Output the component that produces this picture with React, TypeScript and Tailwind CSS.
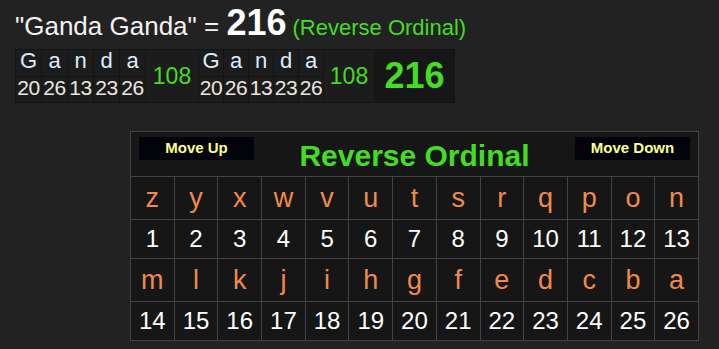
const word = [
  { ch: 'G', v: 20 },
  { ch: 'a', v: 26 },
  { ch: 'n', v: 13 },
  { ch: 'd', v: 23 },
  { ch: 'a', v: 26 },
];

const alphabet = 'zyxwvutsrqponmlkjihgfedcba'.split('');
const rows = [alphabet.slice(0, 13), alphabet.slice(13)];

function WordCells({ wide }: { wide: boolean }) {
  return (
    <>
      {word.map((w, i) => (
        <div key={i} className="flex flex-col gap-[1px]">
          <div
            className={
              (wide ? 'w-[25px]' : 'w-[24px]') +
              ' h-[26px] bg-[#1c1c1c] flex items-end justify-center pb-[4px] text-[22px] leading-none text-[#dcecff]'
            }
          >
            {w.ch}
          </div>
          <div
            className={
              (wide ? 'w-[25px]' : 'w-[24px]') +
              ' h-[25px] bg-[#1c1c1c] flex items-end justify-center pb-[4px] text-[21px] leading-none tracking-[-0.5px] text-[#ebe6e0]'
            }
          >
            {w.v}
          </div>
        </div>
      ))}
    </>
  );
}

function Breakdown() {
  return (
    <div className="ml-[15px] flex w-fit gap-[1px] bg-[#141414] p-[1px] leading-none">
      <WordCells wide />
      <div className="w-[52px] flex items-center justify-center bg-[#1c1c1c] text-[23px] leading-none text-[#44dd22]">108</div>
      <WordCells wide={false} />
      <div className="w-[50px] flex items-center justify-center bg-[#1c1c1c] text-[23px] leading-none text-[#44dd22]">108</div>
      <div className="w-[79px] flex items-center justify-center bg-[#161616] text-[36px] leading-none font-bold text-[#44dd22]">216</div>
    </div>
  );
}

function CipherChart() {
  return (
    <table className="table-fixed w-[569px] border-collapse border border-[#444] bg-[#161616] ml-[130px]">
      <tbody>
        <tr className="h-[45px]">
          <td colSpan={13} className="p-0 align-top">
            <div className="grid grid-cols-[1fr_auto_1fr] items-start px-[8px] pt-[5px]">
              <button className="justify-self-start w-[115px] h-[23px] bg-[#03030c] text-[15px] font-bold text-[#ffff88]">
                Move Up
              </button>
              <span className="pt-[2px] text-[30px] leading-[34px] font-bold text-[#44dd22]">Reverse Ordinal</span>
              <button className="justify-self-end w-[115px] h-[23px] bg-[#03030c] text-[15px] font-bold text-[#ffff88]">
                Move Down
              </button>
            </div>
          </td>
        </tr>
        {rows.map((row, r) => (
          <>
            <tr key={'l' + r} className="h-[43px]">
              {row.map((ch) => (
                <td key={ch} className="border border-[#444] p-0 text-center text-[27px] text-[#f08a4b]">
                  {ch}
                </td>
              ))}
            </tr>
            <tr key={'n' + r} className="h-[39px]">
              {row.map((ch) => (
                <td key={ch} className="border border-[#444] p-0 text-center text-[24px] text-white">
                  {alphabet.indexOf(ch) + 1}
                </td>
              ))}
            </tr>
          </>
        ))}
      </tbody>
    </table>
  );
}

export default function App() {
  return (
    <div className="w-[719px] h-[349px] overflow-hidden bg-[#222222] font-['Liberation_Sans',Arial,sans-serif]">
      <div className="flex items-baseline pl-[15px] pt-[5px] h-[49px] leading-none whitespace-pre">
        <span className="text-[26px] text-[#f2f2f2]">"Ganda Ganda" = </span>
        <span className="text-[36px] font-bold text-white">216</span>
        <span className="ml-[6px] text-[22px] text-[#44dd22]">(Reverse Ordinal)</span>
      </div>
      <Breakdown />
      <div className="h-[28px]" />
      <CipherChart />
    </div>
  );
}
